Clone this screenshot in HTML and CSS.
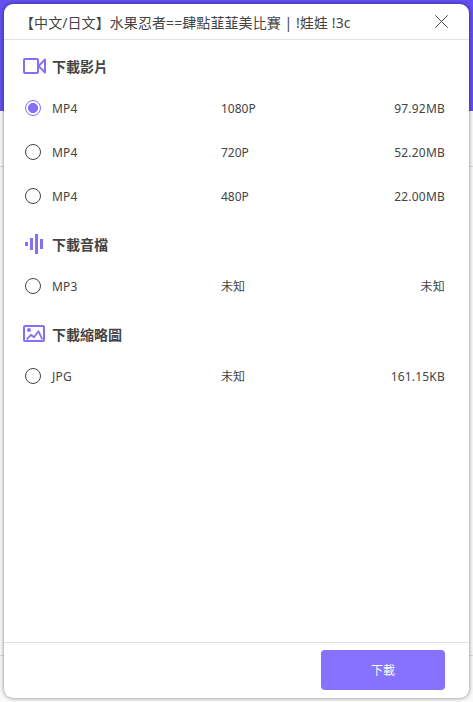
FILE: index.html
```html
<!DOCTYPE html>
<html lang="zh-Hant">
<head>
    <meta charset="UTF-8">
    <meta name="viewport" content="width=device-width, initial-scale=1.0">
    <title>下載</title>
    <link rel="stylesheet" href="styles.css">
</head>
<body>

    <div class="dialog">
        <!-- Title bar -->
        <header class="dialog-header">
            <h1>【中文/日文】水果忍者==肆點韮韮美比賽 | !娃娃 !3c</h1>
            <button class="close" type="button" aria-label="關閉">
                <svg width="13" height="13" viewBox="0 0 13 13"><path d="M0.3 0.3L12.7 12.7M12.7 0.3L0.3 12.7" fill="none" stroke="#333" stroke-width="0.9"/></svg>
            </button>
        </header>

        <main class="dialog-body">
            <!-- Video -->
            <section class="group">
                <h2>
                    <svg class="icon" width="24" height="24" viewBox="0 0 24 24" fill="none" stroke="#8370f5" stroke-width="2" stroke-linejoin="round">
                        <rect x="1" y="5" width="14" height="14" rx="1"/>
                        <path d="M15.5 12L22 5.5V18.5Z"/>
                    </svg>
                    <span>下載影片</span>
                </h2>
                <label class="row">
                    <input type="radio" name="format" checked>
                    <span class="type">MP4</span>
                    <span class="quality">1080P</span>
                    <span class="size">97.92MB</span>
                </label>
                <label class="row">
                    <input type="radio" name="format">
                    <span class="type">MP4</span>
                    <span class="quality">720P</span>
                    <span class="size">52.20MB</span>
                </label>
                <label class="row">
                    <input type="radio" name="format">
                    <span class="type">MP4</span>
                    <span class="quality">480P</span>
                    <span class="size">22.00MB</span>
                </label>
            </section>

            <!-- Audio -->
            <section class="group">
                <h2>
                    <svg class="icon" width="24" height="24" viewBox="0 0 24 24" fill="#8370f5">
                        <rect x="2" y="10" width="3" height="4"/>
                        <rect x="7" y="6" width="3" height="12"/>
                        <rect x="12" y="2" width="3" height="20"/>
                        <rect x="17" y="7" width="3" height="10"/>
                    </svg>
                    <span>下載音檔</span>
                </h2>
                <label class="row">
                    <input type="radio" name="format">
                    <span class="type">MP3</span>
                    <span class="quality">未知</span>
                    <span class="size">未知</span>
                </label>
            </section>

            <!-- Thumbnail -->
            <section class="group">
                <h2>
                    <svg class="icon" width="24" height="24" viewBox="0 0 24 24" fill="none" stroke="#8370f5" stroke-width="2" stroke-linejoin="round">
                        <rect x="1" y="4" width="20" height="15" rx="1"/>
                        <path d="M3.7 17.3L8 12.8L11 15.3L15.5 9.3L19.3 17.3" stroke-width="1.8"/>
                        <circle cx="6" cy="8" r="2" fill="#8370f5" stroke="none"/>
                    </svg>
                    <span>下載縮略圖</span>
                </h2>
                <label class="row">
                    <input type="radio" name="format">
                    <span class="type">JPG</span>
                    <span class="quality">未知</span>
                    <span class="size">161.15KB</span>
                </label>
            </section>
        </main>

        <footer class="dialog-footer">
            <button class="download" type="button">下載</button>
        </footer>
    </div>

</body>
</html>
```
FILE: styles.css
```css
* {
    box-sizing: border-box;
}

/* Page behind the dialog: purple banner, then two divider lines */
body {
    margin: 0;
    padding: 4px;
    height: 702px;
    overflow: hidden;
    font-family: "Noto Sans", "Noto Sans CJK TC", sans-serif;
    color: #444;
    background: linear-gradient(#6450f3 0 111px, #fafafa 111px 166px, #dedede 166px 167px, #fafafa 167px 655px, #dedede 655px 656px, #fafafa 656px);
}

h1,
h2 {
    margin: 0;
}

.dialog {
    display: flex;
    flex-direction: column;
    height: 694px;
    background-color: white;
    border-radius: 9px;
    box-shadow: 0 0 4px rgba(0, 0, 0, 0.5);
}

.dialog-header {
    display: flex;
    align-items: center;
    justify-content: space-between;
    height: 36px;
    padding: 0 21px 0 16px;
    border-bottom: 1px solid #dfe5e6;
}

.dialog-header h1 {
    font-size: 14px;
    font-weight: normal;
    line-height: 20px;
    letter-spacing: 0.08px;
    padding-top: 2px;
    white-space: nowrap;
}

.close {
    display: flex;
    padding: 0;
    border: none;
    background: none;
}

.dialog-body {
    flex: 1;
    padding: 0 24px 0 18px;
}

.group {
    padding-top: 6px;
}

.group h2 {
    display: flex;
    align-items: center;
    gap: 5px;
    height: 40px;
    padding-left: 1px;
    font-size: 14px;
    line-height: 20px;
}

.group h2 span {
    padding-top: 2px;
}

.row {
    display: grid;
    grid-template-columns: 16px 169px 1fr auto;
    align-items: center;
    height: 44px;
    padding-left: 3px;
    font-size: 12px;
    line-height: 18px;
}

.row span {
    padding-top: 2px;
}

.row .type,
.row .quality {
    padding-left: 11px;
}

.row .type,
.row .size {
    letter-spacing: 0.2px;
}

.row input {
    appearance: none;
    width: 16px;
    height: 16px;
    margin: 0;
    border: 1px solid #444;
    border-radius: 50%;
}

.row input:checked {
    border-color: #8370f5;
    background: radial-gradient(circle, #8370f5 4.7px, white 5.3px);
}

.dialog-footer {
    display: flex;
    justify-content: flex-end;
    height: 56px;
    padding: 7px 24px 8px;
    border-top: 1px solid #e2e2e2;
}

.download {
    width: 124px;
    height: 40px;
    padding: 0;
    border: none;
    border-radius: 4px;
    background-color: #8572ff;
    color: white;
    font-family: inherit;
    font-size: 12px;
}
```
